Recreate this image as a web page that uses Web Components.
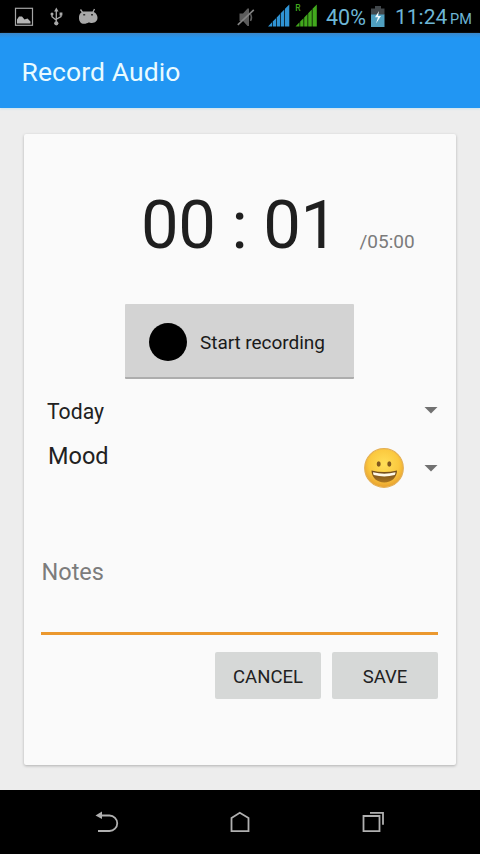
<!DOCTYPE html>
<html lang="en">
<head>
<meta charset="utf-8">
<title>Record Audio</title>
<style>
  body {
    margin: 0;
    background: #ededed;
    font-family: Roboto, "Noto Sans", sans-serif;
    color: #212121;
  }
</style>
</head>
<body>
<record-screen></record-screen>

<script>
class StatusBar extends HTMLElement {
  connectedCallback() {
    this.attachShadow({ mode: 'open' });
    this.shadowRoot.innerHTML = `
      <style>
        :host {
          display: flex;
          justify-content: space-between;
          box-sizing: border-box;
          height: 33px;
          padding-right: 5px;
          background: #000;
          color: #6db6d6;
        }
        svg { display: block; flex: none; }
        .group { display: flex; }
        .text {
          font-size: 21.5px;
          line-height: 35px;
          white-space: nowrap;
        }
        .battery { width: 39px; margin-left: 6px; }
        .time { margin-left: 10px; width: 53px; font-size: 21px; }
        .period {
          width: 25px;
          margin-left: 2px;
          font-size: 14.5px;
          line-height: 39px;
          white-space: nowrap;
        }
      </style>
      <svg width="110" height="33" viewBox="0 0 110 33" fill="none">
        <rect x="15.5" y="8.3" width="17" height="17" stroke="#a5a5a5" stroke-width="1.2"/>
        <path d="M17 23.5v-4l2-3 3 0 2.5 3 3-1 3 3v2z" fill="#b5b5b5"/>
        <g stroke="#a9a9a9" stroke-width="1.3">
          <path d="M56.3 10v13M52 13.5v3.3l4.3 3.4M61 13.5v3l-4.7 2.7"/>
        </g>
        <g fill="#a9a9a9">
          <path d="M56.3 7.5l2.2 4h-4.4z"/>
          <circle cx="56.3" cy="23.3" r="2.1"/>
          <circle cx="52" cy="14" r="1.5"/>
          <rect x="59.6" y="12.5" width="2.8" height="3"/>
          <path d="M79 18c0-4 2-6 4.500-6.500h8.500c3 .5 5.500 3 5.500 6.300 0 3.200-2.500 5.200-5.500 5.200-1.500 0-2.500-.5-3.500-.5-1 .5-2.500 1.300-4.500 1.300-3 0-5-2.300-5-5.800z"/>
        </g>
        <path d="M83 13l-2.500-3.500M92.500 13l2-4" stroke="#a9a9a9" stroke-width="1.3"/>
        <path d="M83.200 14.800h2M91 14.800h2" stroke="#333" stroke-width="1.5"/>
      </svg>
      <div class="group">
        <svg width="83" height="33" viewBox="236 0 83 33">
          <path d="M238.500 13.500h3.500l4.500-5h1.500v17.500h-1.500l-4.500-5h-3.500z" fill="#5c5c5c"/>
          <path d="M236.800 24.800l16-15" stroke="#848484" stroke-width="1.6"/>
          <path d="M249.500 14q2 3.500 0 7" fill="none" stroke="#5c5c5c" stroke-width="1.5"/>
          <g fill="#2f93d4">
            <path d="M267 26.500l4-4.200v4.200zM271.700 21.600l3.300-3.400v8.300h-3.300zM275.700 17.400l3.300-3.400v12.500h-3.300zM279.700 13.300l3.600-3.700v16.900h-3.600zM284 8.800l4.300-4.300v22H284z"/>
          </g>
          <g fill="#42a81d">
            <path d="M294.500 26.500l4-4.200v4.200zM299.200 21.600l3.300-3.400v8.300h-3.300zM303.200 17.400l3.300-3.400v12.500h-3.300zM307.200 13.300l3.600-3.700v16.900h-3.600zM311.500 8.800l4.300-4.300v22h-4.300z"/>
            <text x="294.3" y="11" font-size="8.5" font-weight="500">R</text>
          </g>
        </svg>
        <span class="text battery">40%</span>
        <svg width="20" height="33" viewBox="364 0 20 33">
          <path d="M374 6h6v2.500h3.500V15H370V8.500h4z" fill="#41474b"/>
          <path d="M370 14.500h13.500V27H370z" fill="#4f9fc0"/>
          <path d="M378 11l-4 6.300h3l-2 6.200 5-7.500h-3z" fill="#f2fbff"/>
        </svg>
        <span class="text time">11:24</span>
        <span class="period">PM</span>
      </div>
    `;
  }
}

class AppBar extends HTMLElement {
  connectedCallback() {
    this.attachShadow({ mode: 'open' });
    this.shadowRoot.innerHTML = `
      <style>
        :host {
          display: block;
          box-sizing: border-box;
          height: 75px;
          padding: 1px 22px 0 21.5px;
          background: linear-gradient(#3a87ca, #2196f3 5px);
          box-shadow: 0 1px 2px rgba(190, 225, 240, 0.8);
          color: #e9fbff;
          font-size: 26.5px;
          letter-spacing: 0.1px;
          line-height: 75px;
          white-space: nowrap;
        }
      </style>
      <slot></slot>
    `;
  }
}

class MaterialCard extends HTMLElement {
  connectedCallback() {
    this.attachShadow({ mode: 'open' });
    this.shadowRoot.innerHTML = `
      <style>
        :host {
          display: flex;
          flex-direction: column;
          box-sizing: border-box;
          height: 631px;
          margin: 26px 24px 25px;
          padding: 51px 18px 0 17px;
          background: #fafafa;
          border-radius: 2px;
          box-shadow: 0 1px 3px rgba(0, 0, 0, 0.26);
        }
      </style>
      <slot></slot>
    `;
  }
}

class RecordTimer extends HTMLElement {
  connectedCallback() {
    this.attachShadow({ mode: 'open' });
    this.shadowRoot.innerHTML = `
      <style>
        :host {
          display: flex;
          align-items: baseline;
          height: 80px;
          padding-left: 100px;
          white-space: nowrap;
        }
        .now {
          width: 218.5px;
          font-size: 67px;
          letter-spacing: -0.5px;
          line-height: 80px;
          color: #1f1f1f;
        }
        .limit { font-size: 19px; color: #7b7b7b; }
      </style>
      <span class="now">${this.getAttribute('now')}</span>
      <span class="limit">${this.getAttribute('limit')}</span>
    `;
  }
}

class RecordButton extends HTMLElement {
  connectedCallback() {
    this.attachShadow({ mode: 'open' });
    this.shadowRoot.innerHTML = `
      <style>
        :host {
          display: flex;
          align-items: center;
          align-self: flex-start;
          box-sizing: border-box;
          width: 229px;
          height: 75px;
          margin: 39px 0 0 84px;
          padding: 2px 0 0 24px;
          background: #d3d3d3;
          border-bottom: 2px solid #adadad;
          border-radius: 1px;
          color: #1a1a1a;
          font-size: 19px;
          letter-spacing: -0.05px;
          white-space: nowrap;
        }
        .dot {
          width: 38px;
          height: 38px;
          margin-right: 13px;
          border-radius: 50%;
          background: #000;
        }
        .text { padding-top: 2px; }
      </style>
      <span class="dot"></span>
      <span class="text"><slot></slot></span>
    `;
  }
}

class SpinnerRow extends HTMLElement {
  connectedCallback() {
    this.attachShadow({ mode: 'open' });
    this.shadowRoot.innerHTML = `
      <style>
        :host {
          display: flex;
          align-items: center;
        }
        .label { flex: 1; }
        .arrow {
          width: 14px;
          height: 7px;
          background: #717171;
          clip-path: polygon(0 0, 100% 0, 50% 100%);
        }
      </style>
      <span class="label"><slot></slot></span>
      <slot name="value"></slot>
      <span class="arrow"></span>
    `;
  }
}

class MoodFace extends HTMLElement {
  connectedCallback() {
    this.attachShadow({ mode: 'open' });
    this.shadowRoot.innerHTML = `
      <style>
        :host { display: block; width: 40px; height: 40px; }
        svg { display: block; }
      </style>
      <svg width="40" height="40" viewBox="0 0 40 40">
        <defs>
          <radialGradient id="skin" cx=".5" cy=".4" r=".6">
            <stop offset="0" stop-color="#ffdf58"/>
            <stop offset=".65" stop-color="#fbc83e"/>
            <stop offset="1" stop-color="#e8a02f"/>
          </radialGradient>
          <linearGradient id="mouth" x1="0" y1="0" x2="0" y2="1">
            <stop offset="0" stop-color="#6e4a1c"/>
            <stop offset="1" stop-color="#a87420"/>
          </linearGradient>
        </defs>
        <circle cx="20" cy="20" r="19.3" fill="url(#skin)" stroke="#e4b055" stroke-width="1.2"/>
        <ellipse cx="14.7" cy="16" rx="2" ry="2.7" fill="#80581f"/>
        <ellipse cx="25.3" cy="16" rx="2" ry="2.7" fill="#80581f"/>
        <path d="M7.500 22.500q12.500 3 25.500 0c0 7-5.500 12-12.700 12S7.500 29.500 7.500 22.500z" fill="url(#mouth)"/>
        <path d="M9 24.300q11.300 2.800 22.500 0 0 1.700-.8 2.800-10.300 2.800-21 0-.7-1.100-.7-2.800z" fill="#fff9e8"/>
      </svg>
    `;
  }
}

class NotesField extends HTMLElement {
  connectedCallback() {
    this.attachShadow({ mode: 'open' });
    this.shadowRoot.innerHTML = `
      <style>
        :host {
          display: block;
          box-sizing: border-box;
          height: 83px;
          border-bottom: 3px solid #eb982e;
          color: #7c7c7c;
          font-size: 23.5px;
          line-height: 41px;
        }
        .hint { padding-left: 0.5px; }
      </style>
      <span class="hint"><slot></slot></span>
    `;
  }
}

class FlatButton extends HTMLElement {
  connectedCallback() {
    this.attachShadow({ mode: 'open' });
    this.shadowRoot.innerHTML = `
      <style>
        :host {
          display: block;
          width: 106px;
          height: 47px;
          background: #d6d8d7;
          border-radius: 2px;
          color: #212121;
          font-size: 18.5px;
          line-height: 51px;
          text-align: center;
        }
      </style>
      <slot></slot>
    `;
  }
}

class NavBar extends HTMLElement {
  connectedCallback() {
    this.attachShadow({ mode: 'open' });
    this.shadowRoot.innerHTML = `
      <style>
        :host {
          display: flex;
          align-items: center;
          justify-content: center;
          gap: 109px;
          height: 64px;
          background: #000;
        }
        svg { display: block; fill: none; stroke: #b0b0b0; stroke-width: 1.8; }
      </style>
      <svg width="24" height="24" viewBox="95 810 24 24">
        <path d="M100 815.500h9.500a7.700 7.700 0 0 1 0 15.500H98"/>
        <path d="M95.500 815.500l6.500-4v7.500z" fill="#b0b0b0" stroke="none"/>
      </svg>
      <svg width="24" height="24" viewBox="228 810 24 24">
        <path d="M231.500 831.200v-13.200l8.300-5.300 8.700 5.300v13.200z"/>
      </svg>
      <svg width="24" height="24" viewBox="361 810 24 24">
        <path d="M363.500 816h16v15.200h-16zM370 812.800h13v12"/>
      </svg>
    `;
  }
}

class RecordScreen extends HTMLElement {
  connectedCallback() {
    this.attachShadow({ mode: 'open' });
    this.shadowRoot.innerHTML = `
      <style>
        :host {
          display: block;
          width: 480px;
          height: 854px;
          overflow: hidden;
        }
        .date {
          height: 30px;
          margin-top: 16px;
          padding-left: 6px;
          font-size: 21.2px;
        }
        .date-text { display: block; padding-top: 2px; }
        .mood {
          height: 84px;
          margin-top: 1px;
          padding-left: 7px;
          font-size: 23.5px;
        }
        .mood-text { display: block; padding-bottom: 24px; }
        mood-face { margin-right: 20px; }
        notes-field { margin-top: 42px; }
        .actions {
          display: flex;
          justify-content: flex-end;
          gap: 11px;
          margin-top: 17px;
        }
      </style>
      <status-bar></status-bar>
      <app-bar>Record Audio</app-bar>
      <material-card>
        <record-timer now="00 : 01" limit="/05:00"></record-timer>
        <record-button>Start recording</record-button>
        <spinner-row class="date"><span class="date-text">Today</span></spinner-row>
        <spinner-row class="mood">
          <span class="mood-text">Mood</span>
          <mood-face slot="value"></mood-face>
        </spinner-row>
        <notes-field>Notes</notes-field>
        <div class="actions">
          <flat-button>CANCEL</flat-button>
          <flat-button>SAVE</flat-button>
        </div>
      </material-card>
      <nav-bar></nav-bar>
    `;
  }
}

customElements.define('status-bar', StatusBar);
customElements.define('app-bar', AppBar);
customElements.define('material-card', MaterialCard);
customElements.define('record-timer', RecordTimer);
customElements.define('record-button', RecordButton);
customElements.define('spinner-row', SpinnerRow);
customElements.define('mood-face', MoodFace);
customElements.define('notes-field', NotesField);
customElements.define('flat-button', FlatButton);
customElements.define('nav-bar', NavBar);
customElements.define('record-screen', RecordScreen);
</script>
</body>
</html>
